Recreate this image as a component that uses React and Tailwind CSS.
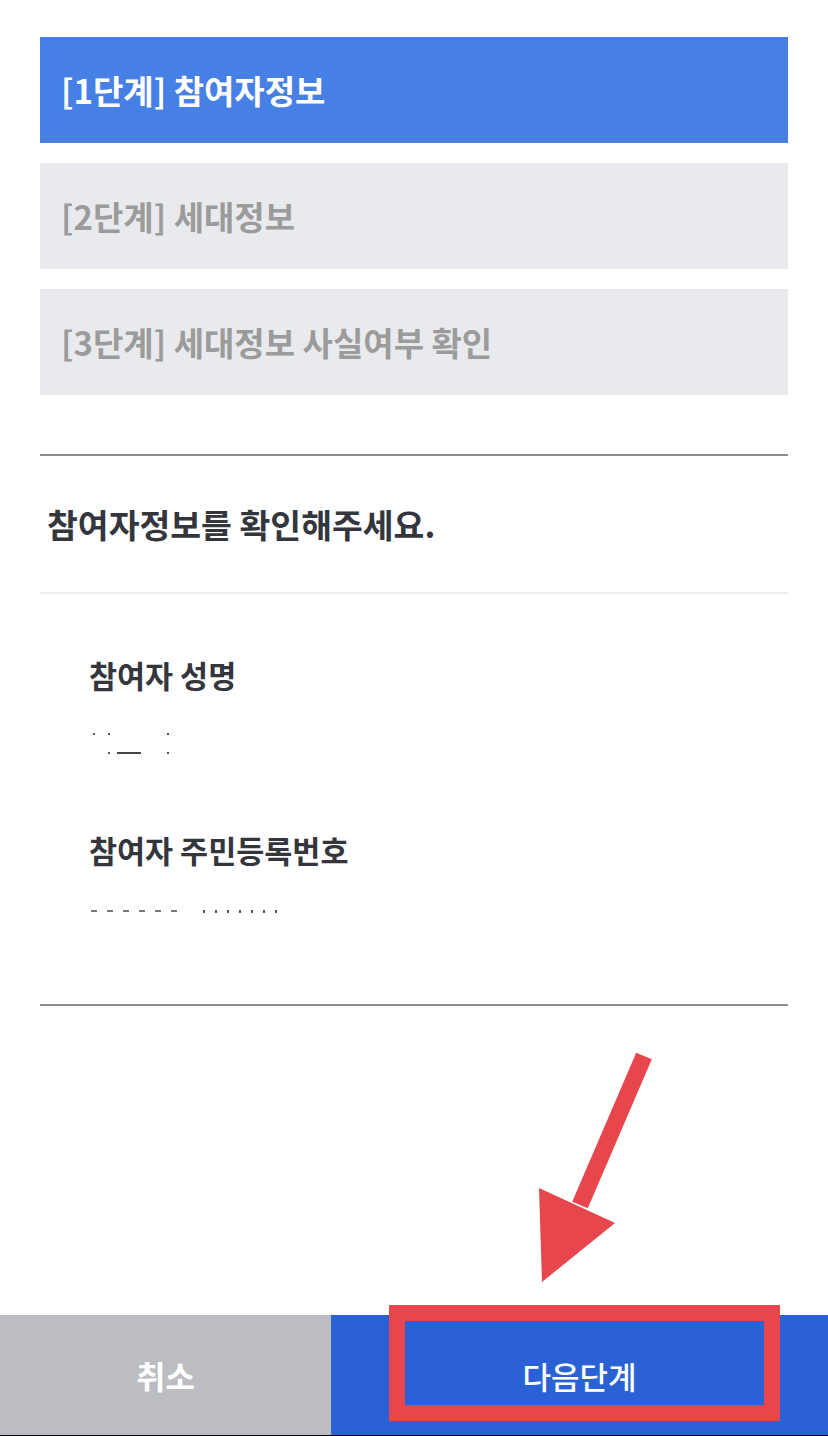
import React from "react";

const font = { fontFamily: '"Noto Sans CJK KR", "Noto Sans", sans-serif' };

function StepBox({ label, active }) {
  return (
    <div
      className={
        active
          ? "h-[106px] bg-[#4780e5] text-white flex items-center pl-[21px]"
          : "h-[106px] bg-[#e9eaed] text-[#9b9b9b] flex items-center pl-[21px]"
      }
    >
      <span className="text-[33px] font-bold tracking-[0px] leading-none">{label}</span>
    </div>
  );
}

function Field({ label, children }) {
  return (
    <div className="flex flex-col">
      <div className="text-[30.5px] font-bold text-[#33363d] leading-none">{label}</div>
      {children}
    </div>
  );
}

export default function App() {
  return (
    <div style={font} className="relative h-[1436px] w-[828px] bg-white flex flex-col overflow-hidden">
      <div className="px-[40px] pt-[37px] flex flex-col gap-[20px]">
        <StepBox label="[1단계] 참여자정보" active />
        <StepBox label="[2단계] 세대정보" />
        <StepBox label="[3단계] 세대정보 사실여부 확인" />
      </div>

      <div className="mx-[40px] mt-[59px] border-t-2 border-[#8e8e8e]" />
      <div className="mx-[40px] h-[136px] flex items-center pl-[7px]">
        <span className="text-[33.5px] font-bold text-[#33363d] leading-none">
          참여자정보를 확인해주세요.
        </span>
      </div>
      <div className="mx-[40px] border-t-2 border-[#ececf0]" />

      <div className="mx-[40px] pl-[49px] pt-[66px] h-[410px] flex flex-col">
        <Field label="참여자 성명">
          <div className="relative h-[24px] mt-[40px]">
            <span className="absolute left-[4px] top-[2px] w-[2px] h-[2px] bg-[#555]" />
            <span className="absolute left-[19px] top-[2px] w-[2px] h-[2px] bg-[#555]" />
            <span className="absolute left-[78px] top-[2px] w-[2px] h-[2px] bg-[#555]" />
            <span className="absolute left-[19px] top-[21px] w-[2px] h-[2px] bg-[#555]" />
            <span className="absolute left-[28px] top-[21px] w-[24px] h-[2px] bg-[#444]" />
            <span className="absolute left-[78px] top-[21px] w-[2px] h-[2px] bg-[#555]" />
          </div>
        </Field>
        <div className="mt-[80px]">
          <Field label="참여자 주민등록번호">
            <div className="flex items-center gap-[10px] mt-[44px] ml-[2px] h-[4px]">
              {[0, 1, 2, 3, 4, 5].map((i) => (
                <span key={"a" + i} className="w-[6px] h-[2px] bg-[#777]" />
              ))}
              <span className="w-[6px]" />
              {[0, 1, 2, 3, 4, 5, 6].map((i) => (
                <span key={"b" + i} className="w-[2px] h-[3px] bg-[#555]" />
              ))}
            </div>
          </Field>
        </div>
      </div>
      <div className="mx-[40px] border-t-2 border-[#8e8e8e]" />

      <div className="mt-auto flex h-[121px] border-b border-black">
        <div className="w-[331px] bg-[#bbbdc2] flex items-center justify-center text-white text-[32px] font-bold leading-none">
          취소
        </div>
        <div className="flex-1 bg-[#2a62d6] flex items-center justify-center text-white text-[31px] font-medium leading-none">
          다음단계
        </div>
      </div>

      {/* red annotation */}
      <div className="absolute left-[389px] top-[1305px] w-[391px] h-[116px] border-[16px] border-[#e8464d]" />
      <svg className="absolute left-0 top-0 pointer-events-none" width="828" height="1436">
        <line x1="644" y1="1056" x2="580" y2="1205" stroke="#e8464d" strokeWidth="17" />
        <polygon points="539,1188 615,1223 542,1282" fill="#e8464d" />
      </svg>
    </div>
  );
}
